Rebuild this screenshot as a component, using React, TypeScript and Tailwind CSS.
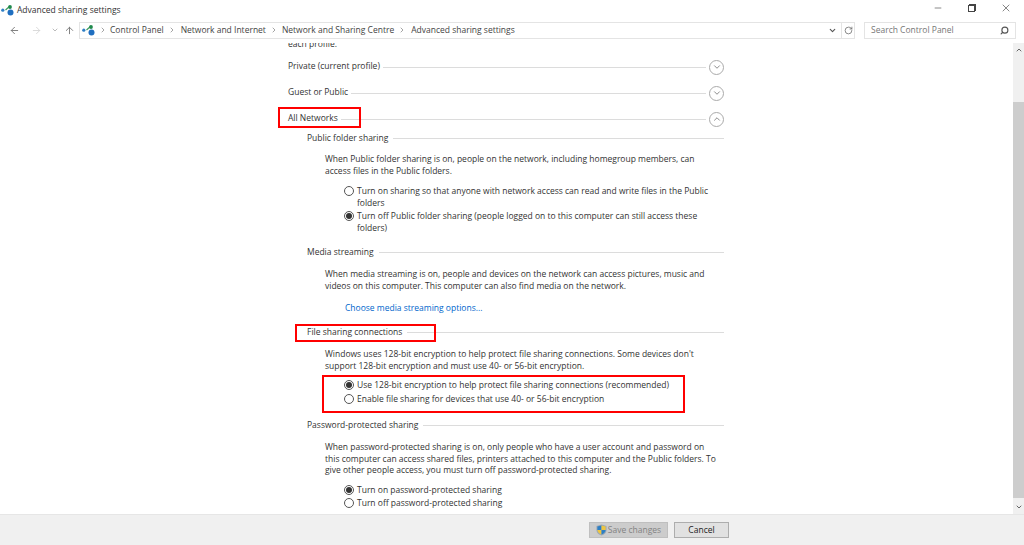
import { ArrowLeft, ArrowRight, ArrowUp, ChevronDown, ChevronRight, ChevronUp, Minus, RotateCw, Search, X } from "lucide-react";

const NetworkIcon = ({ className }: { className: string }) => (
  <svg viewBox="0 0 13 11" className={className}>
    <circle cx="1.8" cy="5.2" r="1.6" fill="#2f7fc4" />
    <path d="M4.5 5 L9 1" stroke="#3a9a5a" strokeWidth="1.2" />
    <circle cx="9" cy="2" r="1.9" fill="#1f8a4c" />
    <circle cx="9.5" cy="7.5" r="3" fill="#1f6fc0" />
  </svg>
);

const Section = ({ title }: { title: string }) => (
  <div className="flex items-center gap-[5px] h-3 leading-3 text-[#333]">
    <span className="whitespace-nowrap">{title}</span>
    <span className="flex-1 h-px bg-[#dcdcdc]" />
  </div>
);

const Profile = ({ title, open, className }: { title: string; open?: boolean; className: string }) => (
  <div className={`flex items-center h-4 ${className}`}>
    <span className="whitespace-nowrap text-[#333] mr-[3px] mb-[2px]">{title}</span>
    <span className="flex-1 h-px bg-[#dcdcdc]" />
    <span className="ml-[3px] w-[15px] h-[15px] rounded-full border border-[#aaa] flex items-center justify-center">
      {open ? <ChevronUp className="w-[10px] h-[10px] text-[#777]" /> : <ChevronDown className="w-[10px] h-[10px] text-[#777]" />}
    </span>
  </div>
);

const Radio = ({ checked, lines, className }: { checked?: boolean; lines: string[]; className?: string }) => (
  <div className={`flex items-start gap-[3px] pl-[19px] ${className ?? ""}`}>
    <span className="mt-px w-[10px] h-[10px] shrink-0 rounded-full border border-[#555] bg-white flex items-center justify-center">
      {checked && <span className="w-[6px] h-[6px] rounded-full bg-[#333]" />}
    </span>
    <div className="leading-3 text-[#333]">
      {lines.map((l) => (
        <div key={l} className="whitespace-nowrap">{l}</div>
      ))}
    </div>
  </div>
);

const Para = ({ lines, className }: { lines: string[]; className: string }) => (
  <div className={`leading-[11.5px] text-[#333] ${className}`}>
    {lines.map((l) => (
      <div key={l} className="whitespace-nowrap">{l}</div>
    ))}
  </div>
);

export default function App() {
  return (
    <div className="relative w-[1024px] h-[545px] overflow-hidden bg-white flex flex-col font-['Open_Sans','Liberation_Sans',sans-serif] text-[8.5px]">
      {/* Title bar */}
      <div className="h-5 flex items-center shrink-0">
        <NetworkIcon className="w-[13px] h-[11px] ml-[1px] mr-[3px]" />
        <span className="text-[#333]">Advanced sharing settings</span>
        <div className="ml-auto flex items-center mb-[4px]">
          <Minus className="w-[10px] h-[10px] text-[#444] mr-[25px]" strokeWidth={1.5} />
          <span className="relative w-2 h-2 mr-[24px]">
            <span className="absolute left-0 bottom-0 w-[7px] h-[7px] border border-[#444] bg-white z-10" />
            <span className="absolute right-0 top-0 w-[7px] h-[7px] border border-[#444]" />
          </span>
          <X className="w-3 h-3 text-[#444] mr-3" strokeWidth={1.3} />
        </div>
      </div>

      {/* Address row */}
      <div className="h-[18px] mt-[1px] flex items-center shrink-0 text-[#444]">
        <ArrowLeft className="w-[11px] h-[11px] ml-[9px] text-[#777]" />
        <ArrowRight className="w-[11px] h-[11px] ml-[11px] text-[#d8d8d8]" />
        <ChevronDown className="w-2 h-2 ml-[9px] text-[#999]" />
        <ArrowUp className="w-[11px] h-[11px] ml-[5px] text-[#777]" />
        <div className="ml-[4px] w-[776px] h-[17px] border border-[#e4e4e4] flex items-center">
          <NetworkIcon className="w-[13px] h-[11px] ml-[2px]" />
          <ChevronRight className="w-2 h-2 ml-[4px] text-[#777]" />
          <span className="ml-[3px]">Control Panel</span>
          <ChevronRight className="w-2 h-2 ml-[4px] text-[#777]" />
          <span className="ml-[5px]">Network and Internet</span>
          <ChevronRight className="w-2 h-2 ml-[4px] text-[#777]" />
          <span className="ml-[4px]">Network and Sharing Centre</span>
          <ChevronRight className="w-2 h-2 ml-[4px] text-[#777]" />
          <span className="ml-[5px]">Advanced sharing settings</span>
          <ChevronDown className="w-[9px] h-[9px] ml-auto mr-[4px] text-[#555]" strokeWidth={3} />
          <span className="w-[13px] h-full border-l border-[#e4e4e4] flex items-center justify-center">
            <RotateCw className="w-[9px] h-[9px] text-[#666]" />
          </span>
        </div>
        <div className="ml-[9px] w-[152px] h-[17px] border border-[#e4e4e4] flex items-center px-[6px] text-[#777]">
          <span>Search Control Panel</span>
          <Search className="w-[9px] h-[9px] ml-auto text-[#555] -scale-x-100" strokeWidth={3} />
        </div>
      </div>

      {/* Main */}
      <div className="flex-1 flex min-h-0 mt-[4px]">
        <div className="flex-1 overflow-hidden">
          <div className="w-[436px] ml-[288px] -mt-[5px]">
            <div className="h-3 leading-3 text-[#333]">each profile.</div>
            <Profile title="Private (current profile)" className="mt-[9px]" />
            <Profile title="Guest or Public" className="mt-[10px]" />
            <Profile title="All Networks" open className="mt-[10px]" />
            <div className="pl-[19px]">
              <div className="mt-[5px]"><Section title="Public folder sharing" /></div>
              <Para className="ml-[18px] mt-[9px]" lines={["When Public folder sharing is on, people on the network, including homegroup members, can", "access files in the Public folders."]} />
              <div className="ml-[18px] mt-[9px]">
                <Radio lines={["Turn on sharing so that anyone with network access can read and write files in the Public", "folders"]} />
                <Radio checked lines={["Turn off Public folder sharing (people logged on to this computer can still access these", "folders)"]} className="mt-[1px]" />
              </div>
              <div className="mt-[12px]"><Section title="Media streaming" /></div>
              <Para className="ml-[18px] mt-[10px]" lines={["When media streaming is on, people and devices on the network can access pictures, music and", "videos on this computer. This computer can also find media on the network."]} />
              <div className="ml-[38px] mt-[11px] h-3 leading-3 text-[#0066cc]">Choose media streaming options...</div>
              <div className="mt-[12px]"><Section title="File sharing connections" /></div>
              <Para className="ml-[18px] mt-[10px]" lines={["Windows uses 128-bit encryption to help protect file sharing connections. Some devices don't", "support 128-bit encryption and must use 40- or 56-bit encryption."]} />
              <div className="ml-[18px] mt-[8px]">
                <Radio checked lines={["Use 128-bit encryption to help protect file sharing connections (recommended)"]} />
                <Radio lines={["Enable file sharing for devices that use 40- or 56-bit encryption"]} className="mt-[2px]" />
              </div>
              <div className="mt-[14px]"><Section title="Password-protected sharing" /></div>
              <Para className="ml-[18px] mt-[10px]" lines={["When password-protected sharing is on, only people who have a user account and password on", "this computer can access shared files, printers attached to this computer and the Public folders. To", "give other people access, you must turn off password-protected sharing."]} />
              <div className="ml-[18px] mt-[8px]">
                <Radio checked lines={["Turn on password-protected sharing"]} />
                <Radio lines={["Turn off password-protected sharing"]} className="mt-[1px]" />
              </div>
            </div>
          </div>
        </div>

        {/* Scrollbar */}
        <div className="w-[11px] bg-[#f0f0f0] flex flex-col items-center shrink-0">
          <ChevronUp className="w-2 h-2 mt-[3px] text-[#666]" strokeWidth={3} />
          <div className="w-full h-[396px] mt-[48px] bg-[#cdcdcd]" />
          <ChevronDown className="w-2 h-2 mt-[5px] text-[#666]" strokeWidth={3} />
        </div>
      </div>

      {/* Footer */}
      <div className="h-[31px] shrink-0 bg-[#f0f0f0] border-t border-[#e6e6e6] flex items-start pt-[7px] pl-[589px]">
        <div className="w-[79px] h-4 bg-[#cccccc] border border-[#bfbfbf] flex items-center justify-center text-[#838383]">
          <svg viewBox="0 0 12 13" className="w-[11px] h-3 mr-[1px]">
            <path d="M6 0.5 L11.5 2 V6.5 C11.5 9.5 9 11.5 6 12.5 C3 11.5 0.5 9.5 0.5 6.5 V2 Z" fill="#9aa7b5" />
            <path d="M6 1.5 V6.5 H1.5 V2.7 Z" fill="#2d7fc4" />
            <path d="M6 1.5 L10.5 2.7 V6.5 H6 Z" fill="#eec641" />
            <path d="M1.5 6.5 H6 V11.3 C3.5 10.5 1.7 8.8 1.5 6.5 Z" fill="#eec641" />
            <path d="M6 6.5 H10.5 C10.3 8.8 8.5 10.5 6 11.3 Z" fill="#2d7fc4" />
          </svg>
          Save changes
        </div>
        <div className="ml-[6px] w-[55px] h-4 bg-[#e1e1e1] border border-[#adadad] flex items-center justify-center text-[#222]">Cancel</div>
      </div>

      {/* Red annotation boxes */}
      <div className="absolute left-[278px] top-[107px] w-[83px] h-[21px] border-2 border-[#ff0000]" />
      <div className="absolute left-[295px] top-[324px] w-[141px] h-[18px] border-2 border-[#ff0000]" />
      <div className="absolute left-[322px] top-[375px] w-[363px] h-[38px] border-2 border-[#ff0000]" />
    </div>
  );
}
